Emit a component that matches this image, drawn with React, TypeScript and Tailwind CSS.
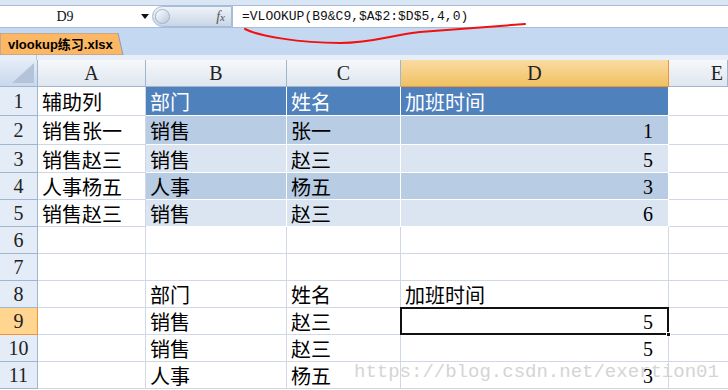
import React from 'react';

const CJK = { fontFamily: '"Noto Sans CJK SC", sans-serif' };
const SERIF = { fontFamily: '"Liberation Serif", "Noto Sans CJK SC", serif' };

type Cell = { t?: string; num?: boolean };
type Row = { h: string; cells: Cell[] };

const ROWS: Row[] = [
  { h: 'h-[29px]', cells: [{ t: '辅助列' }, { t: '部门' }, { t: '姓名' }, { t: '加班时间' }] },
  { h: 'h-[29px]', cells: [{ t: '销售张一' }, { t: '销售' }, { t: '张一' }, { t: '1', num: true }] },
  { h: 'h-[28px]', cells: [{ t: '销售赵三' }, { t: '销售' }, { t: '赵三' }, { t: '5', num: true }] },
  { h: 'h-[27px]', cells: [{ t: '人事杨五' }, { t: '人事' }, { t: '杨五' }, { t: '3', num: true }] },
  { h: 'h-[27px]', cells: [{ t: '销售赵三' }, { t: '销售' }, { t: '赵三' }, { t: '6', num: true }] },
  { h: 'h-[27px]', cells: [{}, {}, {}, {}] },
  { h: 'h-[27px]', cells: [{}, {}, {}, {}] },
  { h: 'h-[27px]', cells: [{}, { t: '部门' }, { t: '姓名' }, { t: '加班时间' }] },
  { h: 'h-[27px]', cells: [{}, { t: '销售' }, { t: '赵三' }, { t: '5', num: true }] },
  { h: 'h-[27px]', cells: [{}, { t: '销售' }, { t: '赵三' }, { t: '5', num: true }] },
  { h: 'h-[27px]', cells: [{}, { t: '人事' }, { t: '杨五' }, { t: '3', num: true }] },
];

const WIDTHS = ['w-[108px]', 'w-[141px]', 'w-[114px]', 'w-[268px]'];

// Excel table style on B1:D5
function cellFill(r: number, c: number) {
  if (c === 0 || r > 4) return 'bg-white border-[#d0d7e5]';
  if (r === 0) return 'bg-[#4f81bd] text-white border-white';
  if (r % 2 === 1) return 'bg-[#b8cce4] border-white';
  return 'bg-[#dbe5f1] border-white';
}

function ColHeader({ label, w, active }: { label: string; w: string; active?: boolean }) {
  return (
    <div
      className={`${w} h-full flex items-center justify-center text-[20px] text-[#222] border-r border-b ${
        active
          ? 'bg-gradient-to-b from-[#f9dba3] to-[#f1c15f] border-[#f29436]'
          : 'bg-gradient-to-b from-[#f6f8fb] to-[#dfe6ef] border-[#9eb6ce]'
      }`}
      style={SERIF}
    >
      {label}
    </div>
  );
}

export default function App() {
  return (
    <div className="relative w-[728px] h-[390px] overflow-hidden bg-white select-none">
      {/* top strip */}
      <div className="h-[6px] bg-[#dbe6f4] border-b border-[#a7bcd6]" />

      {/* formula bar */}
      <div className="h-[21px] flex bg-white">
        <div className="w-[152px] relative flex items-center justify-center text-[14px] text-[#111]" style={SERIF}>
          <span className="mr-[22px]">D9</span>
          <svg className="absolute right-[3px] top-[8px]" width="8" height="5" viewBox="0 0 8 5">
            <path d="M0 0 H8 L4 5 Z" fill="#111" />
          </svg>
        </div>
        <div className="w-[80px] relative flex items-center justify-end pr-[6px] rounded-l-full bg-gradient-to-b from-[#eef3f9] to-[#c9d6e6] border border-[#a7bcd6]">
          <div className="absolute left-[2px] top-[2px] w-[15px] h-[15px] rounded-full bg-gradient-to-br from-white to-[#b8c8dc] border border-[#9fb3cc]" />
          <span className="italic text-[14px] text-[#555]" style={SERIF}>
            f<span className="text-[11px]">x</span>
          </span>
        </div>
        <div className="flex-1 flex items-center pl-[9px] text-[13px] text-[#111] border-l border-[#a7bcd6]" style={{ fontFamily: '"Liberation Mono", monospace' }}>
          =VLOOKUP(B9&amp;C9,$A$2:$D$5,4,0)
        </div>
      </div>

      {/* sheet tab bar */}
      <div className="h-[28px] bg-[#c5d8f1] border-t border-[#a7bcd6] flex items-end">
        <div className="relative h-[22px] w-[124px]">
          <svg className="absolute inset-0" width="124" height="22" viewBox="0 0 124 22">
            <path d="M0 0 H118 L123 22 H0 Z" fill="#fbb764" stroke="#8d9bb0" strokeWidth="1" />
          </svg>
          <span
            className="absolute left-[8px] top-[2px] text-[13px] font-bold text-black"
            style={{ fontFamily: '"Liberation Sans", "Noto Sans CJK SC", sans-serif' }}
          >
            vlookup练习.xlsx
          </span>
        </div>
      </div>
      <div className="h-[5px] bg-[#e8eef7] flex">
        <div className="w-[37px] border-r border-[#b7c7dc]" />
      </div>

      {/* column headers */}
      <div className="h-[27px] flex">
        <div className="w-[38px] h-full relative bg-gradient-to-b from-[#e4ecf7] to-[#c9d8ec] border-r border-b border-[#9eb6ce]">
          <svg className="absolute right-[3px] bottom-[3px]" width="22" height="20" viewBox="0 0 22 20">
            <path d="M22 0 V20 H0 Z" fill="#b4c4d8" />
          </svg>
        </div>
        <ColHeader label="A" w="w-[108px]" />
        <ColHeader label="B" w="w-[141px]" />
        <ColHeader label="C" w="w-[114px]" />
        <ColHeader label="D" w="w-[268px]" active />
        <ColHeader label="E" w="flex-1 justify-end pr-[4px]" />
      </div>

      {/* rows */}
      {ROWS.map((row, r) => (
        <div key={r} className={`${row.h} flex`}>
          <div
            className={`w-[38px] h-full flex items-center justify-center text-[20px] text-[#222] border-r border-b ${
              r === 8 ? 'bg-[#ffd58f] border-[#f29436]' : 'bg-[#e4ecf7] border-[#9eb6ce]'
            }`}
            style={SERIF}
          >
            {r + 1}
          </div>
          {row.cells.map((cell, c) => (
            <div
              key={c}
              className={`${WIDTHS[c]} h-full relative flex items-center border-r border-b text-[20px] text-black ${cellFill(r, c)} ${
                cell.num ? 'justify-end pr-[15px]' : 'pl-[4px]'
              } ${r === 8 && c === 3 ? 'z-10' : ''}`}
              style={cell.num ? SERIF : CJK}
            >
              <span className="leading-none pt-[2px]">{cell.t}</span>
              {r === 8 && c === 3 && (
                <>
                  <div className="absolute -left-[1px] -top-[1px] right-[-1px] bottom-[-1px] border-2 border-[#111]" />
                  <div className="absolute right-[-3px] bottom-[-3px] w-[5px] h-[5px] bg-[#111] border border-white" />
                </>
              )}
            </div>
          ))}
          <div className="flex-1 h-full border-b border-[#d0d7e5]" />
        </div>
      ))}

      {/* red annotation under formula */}
      <svg className="absolute left-0 top-0 pointer-events-none" width="728" height="60" viewBox="0 0 728 60">
        <path
          d="M245 29 C258 36 300 43 340 43 C372 43 392 35 420 32 C460 29 500 26 525 24"
          fill="none"
          stroke="#f01010"
          strokeWidth="2"
          strokeLinecap="round"
        />
      </svg>

      {/* watermark */}
      <div
        className="absolute left-[354px] top-[358px] z-20 text-[19px] text-[#d4d4d4] pointer-events-none"
        style={{ fontFamily: '"Liberation Mono", monospace' }}
      >
        https://blog.csdn.net/exertion01
      </div>
    </div>
  );
}
